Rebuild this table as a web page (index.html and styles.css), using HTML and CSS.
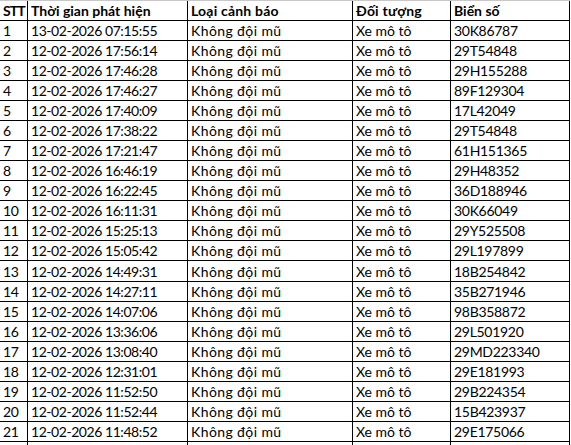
FILE: index.html
```html
<!DOCTYPE html>
<html lang="vi">
<head>
<meta charset="utf-8">
<title>Cảnh báo</title>
<link rel="stylesheet" href="styles.css">
</head>
<body>
<div class="sheet">
  <div class="row head"><div class="c">STT</div><div class="c">Thời gian phát hiện</div><div class="c">Loại cảnh báo</div><div class="c">Đối tượng</div><div class="c">Biển số</div></div>
  <div class="row"><div class="c">1</div><div class="c">13-02-2026 07:15:55</div><div class="c">Không đội mũ</div><div class="c">Xe mô tô</div><div class="c">30K86787</div></div>
  <div class="row"><div class="c">2</div><div class="c">12-02-2026 17:56:14</div><div class="c">Không đội mũ</div><div class="c">Xe mô tô</div><div class="c">29T54848</div></div>
  <div class="row"><div class="c">3</div><div class="c">12-02-2026 17:46:28</div><div class="c">Không đội mũ</div><div class="c">Xe mô tô</div><div class="c">29H155288</div></div>
  <div class="row"><div class="c">4</div><div class="c">12-02-2026 17:46:27</div><div class="c">Không đội mũ</div><div class="c">Xe mô tô</div><div class="c">89F129304</div></div>
  <div class="row"><div class="c">5</div><div class="c">12-02-2026 17:40:09</div><div class="c">Không đội mũ</div><div class="c">Xe mô tô</div><div class="c">17L42049</div></div>
  <div class="row"><div class="c">6</div><div class="c">12-02-2026 17:38:22</div><div class="c">Không đội mũ</div><div class="c">Xe mô tô</div><div class="c">29T54848</div></div>
  <div class="row"><div class="c">7</div><div class="c">12-02-2026 17:21:47</div><div class="c">Không đội mũ</div><div class="c">Xe mô tô</div><div class="c">61H151365</div></div>
  <div class="row"><div class="c">8</div><div class="c">12-02-2026 16:46:19</div><div class="c">Không đội mũ</div><div class="c">Xe mô tô</div><div class="c">29H48352</div></div>
  <div class="row"><div class="c">9</div><div class="c">12-02-2026 16:22:45</div><div class="c">Không đội mũ</div><div class="c">Xe mô tô</div><div class="c">36D188946</div></div>
  <div class="row"><div class="c">10</div><div class="c">12-02-2026 16:11:31</div><div class="c">Không đội mũ</div><div class="c">Xe mô tô</div><div class="c">30K66049</div></div>
  <div class="row"><div class="c">11</div><div class="c">12-02-2026 15:25:13</div><div class="c">Không đội mũ</div><div class="c">Xe mô tô</div><div class="c">29Y525508</div></div>
  <div class="row"><div class="c">12</div><div class="c">12-02-2026 15:05:42</div><div class="c">Không đội mũ</div><div class="c">Xe mô tô</div><div class="c">29L197899</div></div>
  <div class="row tall"><div class="c">13</div><div class="c">12-02-2026 14:49:31</div><div class="c">Không đội mũ</div><div class="c">Xe mô tô</div><div class="c">18B254842</div></div>
  <div class="row"><div class="c">14</div><div class="c">12-02-2026 14:27:11</div><div class="c">Không đội mũ</div><div class="c">Xe mô tô</div><div class="c">35B271946</div></div>
  <div class="row"><div class="c">15</div><div class="c">12-02-2026 14:07:06</div><div class="c">Không đội mũ</div><div class="c">Xe mô tô</div><div class="c">98B358872</div></div>
  <div class="row"><div class="c">16</div><div class="c">12-02-2026 13:36:06</div><div class="c">Không đội mũ</div><div class="c">Xe mô tô</div><div class="c">29L501920</div></div>
  <div class="row"><div class="c">17</div><div class="c">12-02-2026 13:08:40</div><div class="c">Không đội mũ</div><div class="c">Xe mô tô</div><div class="c">29MD223340</div></div>
  <div class="row"><div class="c">18</div><div class="c">12-02-2026 12:31:01</div><div class="c">Không đội mũ</div><div class="c">Xe mô tô</div><div class="c">29E181993</div></div>
  <div class="row"><div class="c">19</div><div class="c">12-02-2026 11:52:50</div><div class="c">Không đội mũ</div><div class="c">Xe mô tô</div><div class="c">29B224354</div></div>
  <div class="row"><div class="c">20</div><div class="c">12-02-2026 11:52:44</div><div class="c">Không đội mũ</div><div class="c">Xe mô tô</div><div class="c">15B423937</div></div>
  <div class="row"><div class="c">21</div><div class="c">12-02-2026 11:48:52</div><div class="c">Không đội mũ</div><div class="c">Xe mô tô</div><div class="c">29E175066</div></div>
  <div class="row"><div class="c"></div><div class="c"></div><div class="c"></div><div class="c"></div><div class="c"></div></div>
</div>
</body>
</html>
```
FILE: styles.css
```css
html, body {
  margin: 0;
  padding: 0;
  background: #fff;
  overflow: hidden;
}
.sheet {
  display: flex;
  flex-direction: column;
  width: 570px;
  border-top: 1px solid #c8c8c8;
  font-family: Lato, "Noto Sans", sans-serif;
  font-size: 14px;
  color: #000;
}
.row {
  display: grid;
  grid-template-columns: 28px 160px 165px 98px 119px;
  height: 20px;
  flex: none;
}
.row.tall {
  height: 21px;
}
.c {
  box-sizing: border-box;
  border-right: 1px solid #000;
  border-bottom: 1px solid #000;
  padding: 0 0 1px 3px;
  display: flex;
  align-items: flex-end;
  line-height: 16px;
  white-space: nowrap;
  overflow: hidden;
}
.row .c:first-child {
  padding-left: 3px;
  letter-spacing: -0.3px;
}
.row:not(.head) .c:nth-child(2) {
  letter-spacing: -0.45px;
}
.row:not(.head) .c:nth-child(3) {
  letter-spacing: 0.4px;
}
.row:not(.head) .c:nth-child(5) {
  letter-spacing: -0.3px;
}
.head .c {
  font-weight: 700;
}
.head .c:first-child {
  letter-spacing: -0.9px;
}
.head .c:nth-child(3),
.head .c:nth-child(4) {
  letter-spacing: 0.2px;
}
```
